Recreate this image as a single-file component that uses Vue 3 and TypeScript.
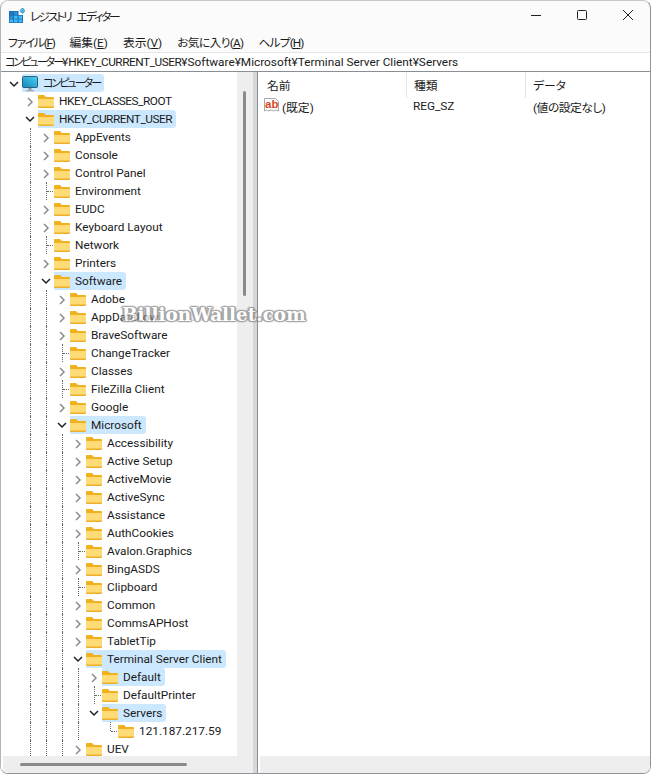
<script setup lang="ts">
type Row = { level: number; name: string; state?: 'open' | 'closed'; sel?: boolean }

const spec: [number, string, string?, boolean?][] = [
  [1, 'HKEY_CLASSES_ROOT', 'closed'],
  [1, 'HKEY_CURRENT_USER', 'open', true],
  [2, 'AppEvents', 'closed'],
  [2, 'Console', 'closed'],
  [2, 'Control Panel', 'closed'],
  [2, 'Environment'],
  [2, 'EUDC', 'closed'],
  [2, 'Keyboard Layout', 'closed'],
  [2, 'Network'],
  [2, 'Printers', 'closed'],
  [2, 'Software', 'open', true],
  [3, 'Adobe', 'closed'],
  [3, 'AppDataLow', 'closed'],
  [3, 'BraveSoftware', 'closed'],
  [3, 'ChangeTracker'],
  [3, 'Classes', 'closed'],
  [3, 'FileZilla Client'],
  [3, 'Google', 'closed'],
  [3, 'Microsoft', 'open', true],
  [4, 'Accessibility', 'closed'],
  [4, 'Active Setup', 'closed'],
  [4, 'ActiveMovie', 'closed'],
  [4, 'ActiveSync', 'closed'],
  [4, 'Assistance', 'closed'],
  [4, 'AuthCookies', 'closed'],
  [4, 'Avalon.Graphics'],
  [4, 'BingASDS', 'closed'],
  [4, 'Clipboard'],
  [4, 'Common', 'closed'],
  [4, 'CommsAPHost', 'closed'],
  [4, 'TabletTip', 'closed'],
  [4, 'Terminal Server Client', 'open', true],
  [5, 'Default', 'closed', true],
  [5, 'DefaultPrinter'],
  [5, 'Servers', 'open', true],
  [6, '121.187.217.59'],
  [4, 'UEV', 'closed'],
]

const rows: Row[] = spec.map(([level, name, state, sel]) => ({
  level,
  name,
  state: state as Row['state'],
  sel,
}))

/* Column 5 stops at "Servers", so the row below it has no guide there. */
function cols(r: Row): boolean[] {
  const out: boolean[] = []
  for (let i = 1; i < r.level; i++) out.push(!(r.level === 6 && i === 5))
  return out
}

const menus = [
  ['ファイル(', 'F', ')'],
  ['編集(', 'E', ')'],
  ['表示(', 'V', ')'],
  ['お気に入り(', 'A', ')'],
  ['ヘルプ(', 'H', ')'],
]
</script>

<template>
  <div class="window">
    <header class="titlebar">
      <svg class="appicon" width="16" height="16" viewBox="0 0 16 16">
        <path d="M0 3h9.5v4h4.5v8H0z" fill="#1a6aa8" />
        <g fill="#3db8f5">
          <rect x="5" y="3.6" width="3.6" height="3.2" fill="#2a8fd6" />
          <rect x="0.6" y="3.6" width="3.6" height="3.2" fill="#1f7cc2" />
          <rect x="0.6" y="7.6" width="3.6" height="3.2" fill="#2a8fd6" />
          <rect x="5" y="7.6" width="3.6" height="3.2" />
          <rect x="9.6" y="7.6" width="3.6" height="3.2" />
          <rect x="0.6" y="11.4" width="3.6" height="3" />
          <rect x="5" y="11.4" width="3.6" height="3" />
          <rect x="9.6" y="11.4" width="3.6" height="3" />
        </g>
        <path d="M13.5 0l2.5 2.7-2.5 2.7-2.5-2.7z" fill="#4cc2ee" stroke="#1a6aa8" stroke-width="0.7" />
      </svg>
      <span class="title">レジストリ エディター</span>
      <div class="caption">
        <svg width="46" height="30" viewBox="0 0 46 30"><path d="M18 14.5h10" stroke="#222" fill="none" /></svg>
        <svg width="46" height="30" viewBox="0 0 46 30"><rect x="18.5" y="9.5" width="9" height="9" rx="1" stroke="#222" fill="none" /></svg>
        <svg width="46" height="30" viewBox="0 0 46 30"><path d="M18 9l10 10M28 9l-10 10" stroke="#222" fill="none" /></svg>
      </div>
    </header>
    <nav class="menubar">
      <span v-for="(m, i) in menus" :key="m[0]" class="menu" :class="`m${i}`">{{ m[0] }}<u>{{ m[1] }}</u>{{ m[2] }}</span>
    </nav>
    <div class="address"><span class="kana">コンピューター</span>¥<span class="caps">HKEY_CURRENT_USER</span>¥Software¥Microsoft¥Terminal Server Client¥Servers</div>
    <main class="panes">
      <section class="left">
        <div class="treewrap">
          <div class="tree">
            <div class="row">
              <span class="cell">
                <svg class="chev" width="16" height="18" viewBox="0 0 16 18"><path d="M4 8l4 4 4-4" stroke="#222" stroke-width="1.5" fill="none" /></svg>
              </span>
              <span class="node sel">
                <svg class="icon" width="16" height="18" viewBox="0 0 16 18">
                  <defs>
                    <linearGradient id="scr" x1="0" y1="1" x2="1" y2="0">
                      <stop offset="0" stop-color="#1587b8" />
                      <stop offset="1" stop-color="#4bd0f5" />
                    </linearGradient>
                  </defs>
                  <rect x="0.5" y="2.5" width="15" height="11" rx="1" fill="url(#scr)" stroke="#2b5f80" />
                  <rect x="6.5" y="14" width="3" height="2" fill="#8e989f" />
                  <rect x="4" y="16" width="8" height="1.5" fill="#aab3ba" />
                </svg>
                <span class="label kana root">コンピューター</span>
              </span>
            </div>
            <div v-for="r in rows" :key="r.name" class="row">
              <span class="cell" />
              <span v-for="(c, i) in cols(r)" :key="i" class="cell" :class="{ line: c }" />
              <span class="cell" :class="{ line: r.level !== 6 && r.name !== 'Servers', stub: !r.state, half: r.level === 6 }">
                <svg v-if="r.state" class="chev" width="16" height="18" viewBox="0 0 16 18">
                  <path v-if="r.state === 'open'" d="M4 7l4 4 4-4" stroke="#222" stroke-width="1.5" fill="none" />
                  <path v-else d="M6 6l4 4-4 4" stroke="#8b8b8b" stroke-width="1.5" fill="none" />
                </svg>
              </span>
              <span class="node" :class="{ sel: r.sel }">
                <svg class="icon" width="16" height="16" viewBox="0 0 16 16">
                  <path d="M0 3A1 1 0 0 1 1 2h5l2 2h7a1 1 0 0 1 1 1v9H0z" fill="#f2b01e" />
                  <path d="M0 6h16v8a1 1 0 0 1-1 1H1a1 1 0 0 1-1-1z" fill="#ffdb78" />
                  <path d="M0 13.4h16v.6a1 1 0 0 1-1 1H1a1 1 0 0 1-1-1z" fill="#eeb02a" />
                </svg>
                <span class="label" :class="{ caps: r.level === 1 }">{{ r.name }}</span>
              </span>
            </div>
          </div>
          <div class="vbar"><i class="vthumb" /></div>
        </div>
        <div class="hbar"><i class="hthumb" /></div>
      </section>
      <div class="splitter" />
      <section class="right">
        <div class="list">
          <div class="head">
            <span class="col c1">名前</span>
            <span class="col c2">種類</span>
            <span class="col c3">データ</span>
          </div>
          <div class="item">
            <span class="first">
              <svg class="icon ficon" width="16" height="16" viewBox="0 0 16 16">
                <path d="M0.5 1.5h11l3 3v9.5l-2.5-1-2.5 1-2.5-1-2.5 1-2-1-2 1z" fill="#fff" stroke="#a9a9a9" />
                <text x="1" y="10.5" class="ab">ab</text>
              </svg>
              <span>(既定)</span>
            </span>
            <span class="v2">REG_SZ</span>
            <span class="v3">(値の設定なし)</span>
          </div>
        </div>
        <div class="hbar rbar" />
      </section>
    </main>
    <div class="mark">BillionWallet.com</div>
  </div>
</template>

<style>
html, body { margin: 0; background: #fff; }
</style>

<style scoped>
.window {
  position: relative;
  width: 651px;
  height: 774px;
  box-sizing: border-box;
  background: #fbfbfb;
  border: 1px solid #8f949a;
  border-top-color: #c8c8c8;
  border-left-color: #b4b4b4;
  border-radius: 8px;
  font-family: Roboto, "Noto Sans CJK JP", sans-serif;
  font-feature-settings: "palt";
  font-size: 11.8px;
  color: #1a1a1a;
  overflow: hidden;
  display: flex;
  flex-direction: column;
}
.kana { font-size: 11px; letter-spacing: -2px; }
.caps { letter-spacing: -0.45px; }
.titlebar { height: 29px; display: flex; align-items: center; padding-left: 8px; flex: none; }
.appicon { margin-right: 5px; }
.title { flex: 1; letter-spacing: -2.1px; word-spacing: 5px; }
.caption { display: flex; margin-right: -1px; }
.menubar { height: 22px; display: flex; gap: 15px; padding-left: 7px; align-items: center; flex: none; }
.menu u { text-decoration: underline; }
.m0 { letter-spacing: -1.3px; }
.m3 { letter-spacing: -0.7px; }
.m4 { letter-spacing: -0.9px; }
.address {
  height: 19px; line-height: 18px; flex: none; box-sizing: border-box;
  padding-left: 4px; background: #fff;
  border-top: 1px solid #e6e6e6;
  white-space: nowrap;
}
.panes { flex: 1; display: flex; min-height: 0; border-top: 1px solid #8a8f96; }
.left { width: 252px; flex: none; display: flex; flex-direction: column; background: #fff; }
.splitter { width: 4px; flex: none; background: #d4d6da; border-right: 1px solid #8a8f96; }
.treewrap { flex: 1; display: flex; min-height: 0; }
.tree { flex: 1; padding: 2px 0 0 5px; overflow: hidden; background: #fff; }
.row { display: flex; height: 18px; align-items: center; white-space: nowrap; }
.cell { position: relative; width: 16px; height: 18px; flex: none; }
.cell.line::before { content: ""; position: absolute; left: 8px; top: 0; bottom: 0; border-left: 1px dotted #666; }
.cell.half::before { content: ""; position: absolute; left: 8px; top: 0; height: 9px; border-left: 1px dotted #666; }
.cell.stub::after { content: ""; position: absolute; left: 9px; width: 6px; top: 9px; border-top: 1px dotted #666; }
.chev { position: absolute; left: 0; top: 0; background: #fff; }
.node { display: flex; align-items: center; height: 18px; margin-left: -2px; padding: 0 4px 0 2px; border-radius: 3px; }
.node.sel { background: #cce8ff; }
.icon { flex: none; }
.label { margin-left: 5px; }
.label.root { margin-top: -3px; }
.vbar { width: 16px; flex: none; background: #eeeeee; padding-left: 6px; box-sizing: border-box; }
.vthumb { display: block; width: 3px; height: 205px; margin-top: 19px; background: #8a8a8a; border-radius: 2px; }
.hbar { height: 17px; flex: none; background: #eeeeee; padding-top: 7px; box-sizing: border-box; margin-left: 2px; }
.hthumb { display: block; width: 167px; height: 3px; margin-left: 17px; background: #8a8a8a; border-radius: 2px; }
.right { flex: 1; display: flex; flex-direction: column; background: #fff; min-width: 0; }
.list { flex: 1; }
.head { display: flex; height: 26px; align-items: center; }
.col { height: 26px; line-height: 26px; padding-top: 1px; box-sizing: border-box; border-right: 1px solid #e5e5e5; }
.c1 { width: 149px; padding-left: 9px; }
.c2 { width: 119px; padding-left: 7px; }
.c3 { width: 120px; padding-left: 7px; border-right: 0; }
.item { display: flex; height: 18px; align-items: center; margin-top: -1px; }
.first { width: 149px; box-sizing: border-box; display: flex; align-items: center; gap: 2px; padding-left: 6px; }
.ficon { margin-top: -3px; }
.v2 { width: 119px; box-sizing: border-box; padding-left: 6px; }
.v3 { padding-left: 7px; letter-spacing: -0.5px; }
.ab { font: bold 11.5px "Liberation Sans", sans-serif; fill: #d9481f; }
.mark {
  position: absolute; left: 121px; top: 303px;
  font: bold 18.4px "DejaVu Serif", serif; color: #fff; opacity: 0.7;
  text-shadow: -1px -1px 1px #808080, 1px -1px 1px #808080, -1px 1px 1px #808080, 1px 1px 1px #808080, 0 0 2px #808080, 2px 0 1px #808080, -2px 0 1px #808080;
  white-space: nowrap;
}
</style>
